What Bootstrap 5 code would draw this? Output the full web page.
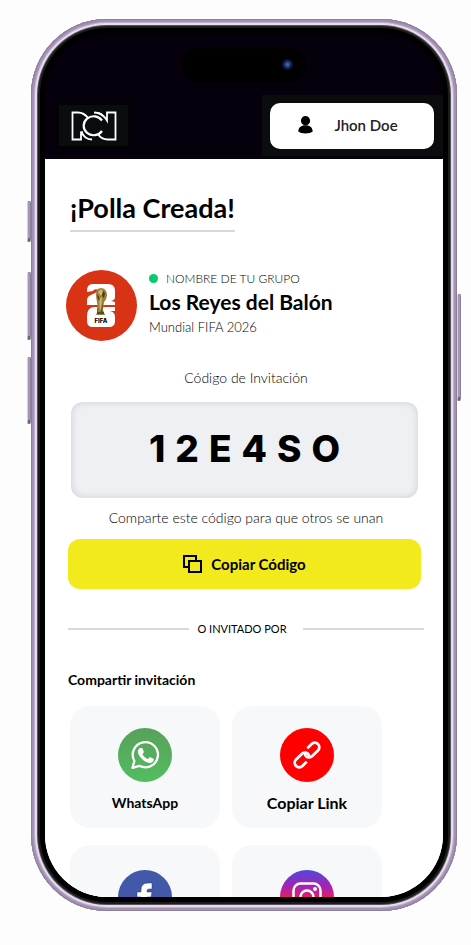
<!DOCTYPE html>
<html lang="es">
<head>
<meta charset="utf-8">
<meta name="viewport" content="width=device-width, initial-scale=1">
<title>¡Polla Creada!</title>
<link href="https://cdn.jsdelivr.net/npm/bootstrap@5.3.0/dist/css/bootstrap.min.css" rel="stylesheet">
<style>
body{font-family:Lato,"Liberation Sans",sans-serif;background:#fdfdfd;color:#000;height:100vh;padding:19px 14px 34px 31px;overflow:hidden}
.phone{height:100%;padding:14px;border-radius:76px;background:#000;box-shadow:inset 0 0 0 1px #8d8194,inset 0 0 0 3px #a491b8,inset 0 0 0 4px #c2b1d2,inset 0 0 0 6px #e6deeb,inset 0 0 0 7px #55505a,inset 0 0 0 9px #1c1c1c}
.side-key{position:absolute;width:4px;background:#a796b8;border:1px solid #8b8194;border-left-color:#d5cfda;border-bottom:4px solid #6d6378;border-radius:2px}
.key-a{left:-4px;top:182px;height:41px}
.key-b{left:-4px;top:253px;height:68px}
.key-c{left:-4px;top:338px;height:67px}
.key-d{right:-4px;top:275px;height:107px}
.screen{height:100%;border-radius:62px;background:linear-gradient(#05000b 120px,#fff 120px)}
.topbar{background:#05000b;height:126px;padding-left:14px}
.island{width:124px;height:35px;border-radius:18px;background:#000;left:137px;top:14px;padding-right:13px}
.lens{width:11px;height:11px;border-radius:50%;background:radial-gradient(circle,#3d5fb0 0 15%,#14204f 45%,#0c0f2a 70%,#120810)}
.brand-box{background:#0b0c0e;width:69px;height:41px;margin-bottom:13px;box-shadow:0 0 0 3px #020104}
.user-box{background:#0b0c0e;padding:8px 9px 7px 8px;margin-bottom:3px}
.user-btn{width:164px;height:46px;background:#fff;border-radius:10px;font-size:15px;line-height:20px;font-weight:600;color:#222;gap:21px;padding:0 8px 2px 0}
.sheet{padding:0 19px 0 23px;background:#fff}
h1{font-size:27px;line-height:36px;font-weight:700;border-bottom:2px solid #d9d9d9;padding-bottom:4px;margin:31px 0 0 2px}
.group-row{margin-top:38px;margin-left:-2px;gap:12px}
.group-text{padding-bottom:5px}
.eyebrow{font-size:12px;line-height:16px;gap:8px;font-weight:300}
.dot{width:9px;height:9px;border-radius:50%;background:#05cc6b}
h2{font-size:21px;line-height:28px;font-weight:700;margin:1px 0 2px}
.sub{font-size:13px;line-height:18px}
.thin{font-size:14px;line-height:20px}
.code-title{margin:27px 0 0}
.code-hint{margin:10px 0 0}
.code-box{margin:14px 6px 0 3px;height:96px;border-radius:12px;background:#eff0f4;box-shadow:inset 0 0 6px 1px #d3d4d8;font-family:Inter,sans-serif;font-weight:800;font-size:37px;gap:10px;padding-bottom:3px}
.copy-btn{height:50px;margin:11px 3px 0 0;border-radius:12px;background:#f2ea1c;color:#000;font-size:15px;font-weight:700;gap:9px}
.copy-btn:hover{background:#e6de12}
.or-row{margin-top:31px;font-size:11px;line-height:18px}
.or-row hr{border-top:2px solid #d9d9d9;opacity:1;margin:0}
h3{font-size:14px;line-height:20px;font-weight:700;margin:32px 0 16px}
.share-grid{display:grid;grid-template-columns:1fr 1fr;gap:17px 12px;padding:0 42px 0 2px}
.tile{height:122px;border-radius:20px;background:#f6f8fa;padding-top:22px;font-size:14px;line-height:20px;font-weight:700;gap:11px;color:#000;text-decoration:none}
.tile-lg{font-size:16px}
.tile-low{padding-top:25px}
</style>
<script src="https://cdn.jsdelivr.net/npm/bootstrap@5.3.0/dist/js/bootstrap.bundle.min.js"></script>
</head>
<body>
<div class="phone position-relative">
  <span class="side-key key-a"></span><span class="side-key key-b"></span><span class="side-key key-c"></span><span class="side-key key-d"></span>
  <div class="screen overflow-hidden d-flex flex-column">
    <header class="topbar position-relative d-flex justify-content-between align-items-end flex-shrink-0">
      <div class="island position-absolute d-flex align-items-center justify-content-end"><span class="lens"></span></div>
      <div class="brand-box d-flex align-items-center justify-content-center">
        <svg width="47" height="30" viewBox="0 0 47 30" fill="none" stroke="#fff" stroke-width="1.8" role="img" aria-label="RCN">
          <path d="M18.500 7.500C15.500 3.500 12.500 1.500 8 1.500H2.500v27H11v-8c2 5 5 8 11 8"/>
          <path d="M32 9.500a10 9.500 0 1 0 0 10.500" stroke-width="2.200"/>
          <path d="M24 1.500c6 0 10 3 13 8v-8h8.500v27H38c-5 0-8-2-10-5.500"/>
          <path d="M28 1.500c4 1 6 3 8 6" stroke-width="1"/>
          <path d="M12 20c1 4 4 7 7 8" stroke-width="1"/>
        </svg>
      </div>
      <div class="user-box">
        <button type="button" class="btn user-btn d-flex align-items-center justify-content-center">
          <svg width="15" height="18" viewBox="0 0 15 18" aria-hidden="true"><circle cx="7.500" cy="4.700" r="4.600"/><path d="M.3 15.500C.3 11.500 3 9.200 7.500 9.200s7.200 2.300 7.200 6.300c-2.700 2.500-11.700 2.500-14.400 0z"/></svg>
          <span>Jhon Doe</span>
        </button>
      </div>
    </header>
    <main class="sheet flex-grow-1 overflow-hidden">
      <div class="d-flex"><h1>¡Polla Creada!</h1></div>
      <section class="group-row d-flex align-items-center">
        <svg class="flex-shrink-0" width="71" height="71" viewBox="0 0 71 71" role="img" aria-label="FIFA 2026">
          <circle cx="35.500" cy="35.500" r="35.500" fill="#d93315"/>
          <path fill="#fff" d="M21 19q1-5 6-5h15q7 0 7 7v6q0 3-4 4l4 1v3H21v-5q0-4 6-6l6-3v-1q-5-2-6 1l-6 1z"/>
          <path fill="#fff" d="M21 46q0-9 8-9h20v4h-5q5 1 5 6v4q0 6-6 6H27q-6 0-6-6z"/>
          <path fill="#9c8038" d="M30 24q0-6 5-6t6 6q0 5-3 8l-1 8 2 5h-9l2-5-1-8q-1-4-1-8z"/>
          <path fill="#d2b96e" d="M32 22l3-3 2 3-2 4zm1 7l3-2-1 11-1 3z"/>
          <path fill="#4b3b1a" d="M37 21l2 2-1 5-2-2zm-6 3l2 3 1 4-2-2zm6 10-1 6 1 3h-2l1-7zM31 36l1 4-1 4z"/>
          <path fill="#315d36" d="M31 42h7v2h-7z"/>
          <text x="35" y="53" text-anchor="middle" font-family="Inter,sans-serif" font-size="6" font-weight="800">FIFA</text>
        </svg>
        <div class="group-text">
          <div class="eyebrow d-flex align-items-center"><span class="dot"></span><span>NOMBRE DE TU GRUPO</span></div>
          <h2>Los Reyes del Balón</h2>
          <div class="sub fw-light">Mundial FIFA 2026</div>
        </div>
      </section>
      <p class="thin code-title fw-light text-center">Código de Invitación</p>
      <div class="code-box d-flex align-items-center justify-content-center"><span>1</span><span>2</span><span>E</span><span>4</span><span>S</span><span>O</span></div>
      <p class="thin code-hint fw-light text-center">Comparte este código para que otros se unan</p>
      <div class="d-grid"><button type="button" class="btn copy-btn d-flex align-items-center justify-content-center">
        <svg width="19" height="18" viewBox="0 0 19 18" fill="none" stroke="#000" stroke-width="2" aria-hidden="true"><path d="M6 12H1V1h12v5"/><path d="M6 6h12v11H6z"/></svg>
        <span>Copiar Código</span></button></div>
      <div class="or-row d-flex align-items-center"><hr class="flex-fill"><span class="ps-2 pe-3">O INVITADO POR</span><hr class="flex-fill"></div>
      <h3>Compartir invitación</h3>
      <div class="share-grid">
        <a href="#" class="tile d-flex flex-column align-items-center">
          <svg class="flex-shrink-0" width="54" height="54" viewBox="0 0 54 54" aria-hidden="true">
            <defs><linearGradient id="wa" x2="0" y2="1"><stop stop-color="#58a15b"/><stop offset="1" stop-color="#52bd60"/></linearGradient></defs>
            <circle cx="27" cy="27" r="27" fill="url(#wa)"/>
            <path fill="none" stroke="#fff" stroke-width="2.300" stroke-linejoin="round" d="M14.500 39.800l1.900-6.800a12.600 12.600 0 1 1 4.900 4.800z"/>
            <path fill="#fff" d="M22.300 20h1.300q.7 0 1 .8l1.200 2.800q.2.600-.2 1.100l-1.300 1.600q2 3.500 5.500 5l1.500-1.800q.5-.5 1.100-.2l2.900 1.400q.6.300.5.900-.2 2.800-3.700 3.300c-5.500.2-12.300-6.700-12.200-11.300q.1-2 1.500-3.300.4-.3.900-.3z"/>
          </svg><span>WhatsApp</span></a>
        <a href="#" class="tile tile-lg d-flex flex-column align-items-center">
          <svg class="flex-shrink-0" width="54" height="54" viewBox="0 0 54 54" aria-hidden="true">
            <circle cx="27" cy="27" r="27" fill="#f00"/>
            <g fill="none" stroke="#fff" stroke-width="2.800" stroke-linecap="round" transform="rotate(-45 27 27)"><path d="M22 31.500h-5a4.500 4.500 0 0 1 0-9h8a4.500 4.500 0 0 1 4.200 6" transform="translate(-1 0)"/><path d="M32 22.500h5a4.500 4.500 0 0 1 0 9h-8a4.500 4.500 0 0 1-4.200-6" transform="translate(1 0)"/></g>
          </svg><span>Copiar Link</span></a>
        <a href="#" class="tile tile-low d-flex flex-column align-items-center" aria-label="Facebook">
          <svg class="flex-shrink-0" width="54" height="54" viewBox="0 0 54 54" aria-hidden="true"><circle cx="27" cy="27" r="27" fill="#4258a8"/><path fill="#fff" stroke="#23388a" stroke-width=".5" d="M23 43V27h-4v-5h4v-2q0-7 7-7h4v6h-3q-2 0-2 2v1h5l-1 5h-4v16z"/></svg></a>
        <a href="#" class="tile tile-low d-flex flex-column align-items-center" aria-label="Instagram">
          <svg class="flex-shrink-0" width="54" height="54" viewBox="0 0 54 54" aria-hidden="true">
            <defs><linearGradient id="ig" x2="0" y2="1"><stop stop-color="#4f48d8"/><stop offset=".3" stop-color="#a522b5"/><stop offset=".5" stop-color="#e02068"/><stop offset="1" stop-color="#fdb045"/></linearGradient></defs>
            <circle cx="27" cy="27" r="27" fill="url(#ig)"/><g fill="none" stroke="#fff" stroke-width="2.500"><rect x="13.500" y="13.500" width="27" height="27" rx="7"/><circle cx="27" cy="27" r="6.500"/></g><circle cx="35" cy="19" r="2" fill="#fff"/></svg></a>
      </div>
    </main>
  </div>
</div>
</body>
</html>
